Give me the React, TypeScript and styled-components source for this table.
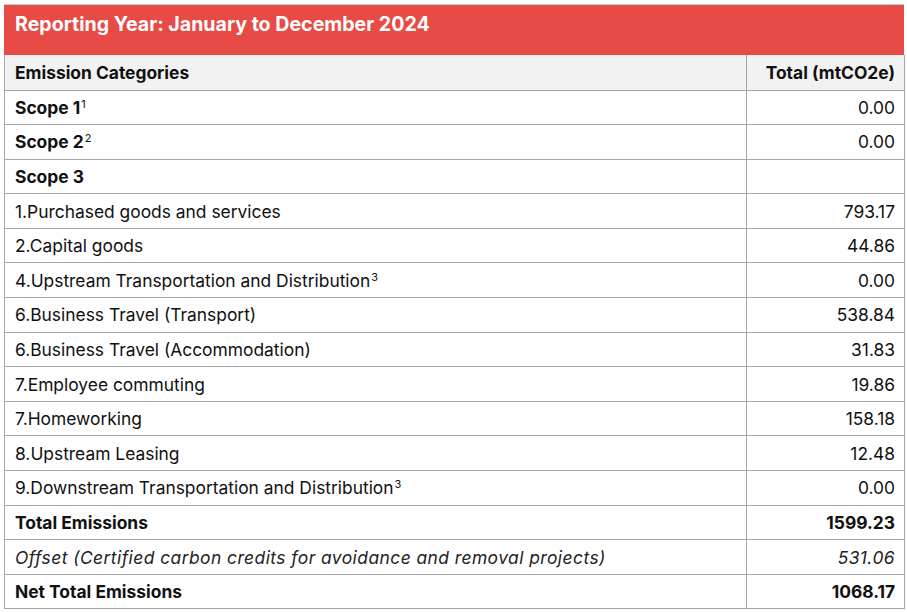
import styled, { createGlobalStyle } from 'styled-components';

const GlobalStyle = createGlobalStyle`
  body {
    margin: 0;
    background: #fff;
    font-family: Inter, 'Open Sans', 'Liberation Sans', sans-serif;
    color: #111;
  }
`;

const StyledDivPage = styled('div')`
  padding: 4px 3px 0 4px;
`;

const StyledDivBanner = styled('div')`
  height: 51px;
  box-sizing: border-box;
  background-color: #e84a45;
  border-top: 1px solid #c9c9c9;
  color: #fff;
  font-weight: 700;
  font-size: 19.6px;
  line-height: 24px;
  padding: 7px 11px 0;
`;

const StyledTable = styled('table')`
  width: 900px;
  border-collapse: collapse;
  table-layout: fixed;
  font-size: 17.4px;
`;

const StyledHeadCell = styled('th')<{ $right?: boolean }>`
  height: 35px;
  box-sizing: border-box;
  padding: 0 9px 0 10px;
  border: 1px solid #a6a6a6;
  border-top: none;
  background-color: #f2f2f2;
  font-weight: 700;
  text-align: ${({ $right }) => ($right ? 'right' : 'left')};
`;

const StyledCell = styled('td')<{ $right?: boolean; $bold?: boolean; $italic?: boolean }>`
  height: 34.6px;
  box-sizing: border-box;
  padding: 0 9px 0 10px;
  border: 1px solid #a6a6a6;
  font-weight: ${({ $bold }) => ($bold ? 700 : 400)};
  font-style: ${({ $italic }) => ($italic ? 'italic' : 'normal')};
  letter-spacing: ${({ $italic }) => ($italic ? '0.45px' : 'normal')};
  color: ${({ $italic }) => ($italic ? '#222' : '#111')};
  text-align: ${({ $right }) => ($right ? 'right' : 'left')};
  white-space: nowrap;
`;

const StyledSup = styled('sup')`
  font-size: 11px;
  font-weight: 400;
  vertical-align: 6px;
  line-height: 0;
  margin-left: 1px;
`;

type Row = {
  label: string;
  note?: string;
  value: string;
  bold?: boolean;
  valueBold?: boolean;
  italic?: boolean;
};

const rows: Row[] = [
  { label: 'Scope 1', note: '1', value: '0.00', bold: true },
  { label: 'Scope 2', note: '2', value: '0.00', bold: true },
  { label: 'Scope 3', value: '', bold: true },
  { label: '1.Purchased goods and services', value: '793.17' },
  { label: '2.Capital goods', value: '44.86' },
  { label: '4.Upstream Transportation and Distribution', note: '3', value: '0.00' },
  { label: '6.Business Travel (Transport)', value: '538.84' },
  { label: '6.Business Travel (Accommodation)', value: '31.83' },
  { label: '7.Employee commuting', value: '19.86' },
  { label: '7.Homeworking', value: '158.18' },
  { label: '8.Upstream Leasing', value: '12.48' },
  { label: '9.Downstream Transportation and Distribution', note: '3', value: '0.00' },
  { label: 'Total Emissions', value: '1599.23', bold: true, valueBold: true },
  {
    label: 'Offset (Certified carbon credits for avoidance and removal projects)',
    value: '531.06',
    italic: true,
  },
  { label: 'Net Total Emissions', value: '1068.17', bold: true, valueBold: true },
];

export default function App() {
  return (
    <StyledDivPage>
      <GlobalStyle />
      <StyledDivBanner>Reporting Year: January to December 2024</StyledDivBanner>
      <StyledTable>
        <colgroup>
          <col style={{ width: '742px' }} />
          <col style={{ width: '158px' }} />
        </colgroup>
        <thead>
          <tr>
            <StyledHeadCell>Emission Categories</StyledHeadCell>
            <StyledHeadCell $right>Total (mtCO2e)</StyledHeadCell>
          </tr>
        </thead>
        <tbody>
          {rows.map((row, i) => (
            <tr key={i}>
              <StyledCell $bold={row.bold} $italic={row.italic}>
                {row.label}
                {row.note && <StyledSup>{row.note}</StyledSup>}
              </StyledCell>
              <StyledCell $right $bold={row.valueBold} $italic={row.italic}>
                {row.value}
              </StyledCell>
            </tr>
          ))}
        </tbody>
      </StyledTable>
    </StyledDivPage>
  );
}
